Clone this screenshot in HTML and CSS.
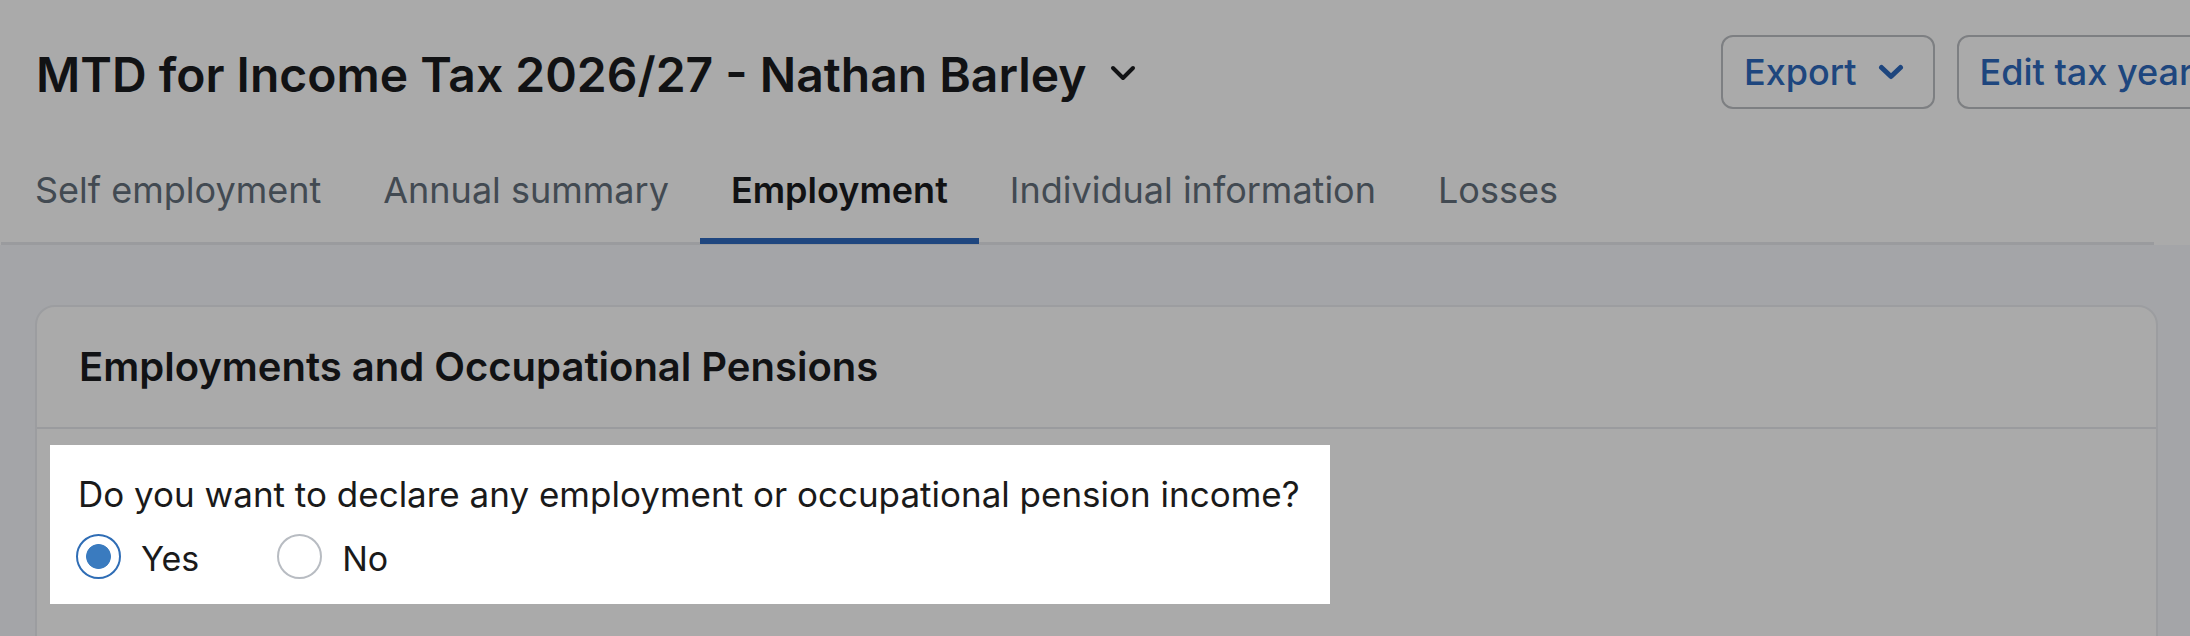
FILE: index.html
```html
<!DOCTYPE html>
<html lang="en">
  <head>
    <meta charset="UTF-8" />
    <meta name="viewport" content="width=device-width, initial-scale=1.0" />
    <title>MTD for Income Tax - Employment</title>
    <link rel="stylesheet" href="styles.css">
  </head>
  <body>
    <!-- Page header -->
    <header class="page-header">
      <div class="title-row">
        <h1 class="page-title">
          MTD for Income Tax 2026/27 - Nathan Barley
          <svg class="title-caret" width="26" height="16" viewBox="0 0 26 16">
            <path d="M3 3 L13 13 L23 3" />
          </svg>
        </h1>
        <div class="actions">
          <button class="btn">
            Export
            <svg class="btn-caret" width="26" height="16" viewBox="0 0 26 16">
              <path d="M3.5 3.5 L13 12.5 L22.5 3.5" />
            </svg>
          </button>
          <button class="btn">Edit tax year</button>
        </div>
      </div>

      <!-- Tabs -->
      <nav class="tabs">
        <a class="tab" href="#">Self employment</a>
        <a class="tab" href="#">Annual summary</a>
        <a class="tab active" href="#">Employment</a>
        <a class="tab" href="#">Individual information</a>
        <a class="tab" href="#">Losses</a>
      </nav>
    </header>

    <main class="content">
      <section class="card">
        <div class="card-header">
          <h2>Employments and Occupational Pensions</h2>
        </div>
        <div class="card-body">
          <!-- Highlighted step of the guided tour -->
          <div class="question spotlight">
            <p class="question-text">
              Do you want to declare any employment or occupational pension income?
            </p>
            <div class="radio-group">
              <label class="radio">
                <input type="radio" name="declare" value="yes" checked />
                <span>Yes</span>
              </label>
              <label class="radio">
                <input type="radio" name="declare" value="no" />
                <span>No</span>
              </label>
            </div>
          </div>
        </div>
      </section>
    </main>
  </body>
</html>
```

FILE: styles.css
```css
body {
  margin: 0;
  font-family: Inter, "Noto Sans", sans-serif;
  color: #1a1b1e;
  background: #f6f8fd;
  overflow: hidden;
}
.page-header {
  background: #ffffff;
  padding: 35px 36px 0;
}
.title-row {
  display: flex;
  align-items: center;
}
.page-title {
  flex: 1;
  display: flex;
  align-items: center;
  gap: 23px;
  margin: 6px 0 0;
  font-size: 48px;
  line-height: 58px;
  font-weight: 600;
  white-space: nowrap;
}
.title-caret {
  margin-top: -5px;
}
.title-caret path {
  fill: none;
  stroke: #1a1b1e;
  stroke-width: 4;
  stroke-linecap: round;
  stroke-linejoin: round;
}
.actions {
  flex: 0 0 433px;
  min-width: 0;
  display: flex;
  gap: 22px;
}
.btn {
  flex-shrink: 0;
  display: flex;
  align-items: center;
  gap: 21px;
  height: 74px;
  padding: 0 29px 0 21px;
  background: #ffffff;
  border: 2px solid #bcbfc3;
  border-radius: 12px;
  color: #2e69be;
  font-family: inherit;
  font-size: 36px;
  font-weight: 500;
  white-space: nowrap;
}
.btn-caret path {
  fill: none;
  stroke: #2e69be;
  stroke-width: 5;
  stroke-linecap: round;
  stroke-linejoin: round;
}
.tabs {
  display: flex;
  margin-top: 59px;
  margin-left: -35px;
  padding-left: 3px;
  border-bottom: 3px solid #e8e9ee;
}
.tab {
  padding: 0 31px 26px;
  margin-bottom: -2px;
  border-bottom: 6px solid transparent;
  font-size: 36px;
  line-height: 44px;
  color: #646f7b;
  text-decoration: none;
  white-space: nowrap;
}
.tab.active {
  color: #1a1b1e;
  font-weight: 600;
  border-bottom-color: #2f69bf;
}
.content {
  padding: 60px 32px 0 35px;
}
.card {
  background: #ffffff;
  border: 2px solid #eaecf0;
  border-radius: 20px;
}
.card-header {
  padding: 36px 42px;
  border-bottom: 2px solid #e8e9ee;
}
.card-header h2 {
  margin: 0;
  font-size: 40px;
  line-height: 48px;
  font-weight: 600;
}
.card-body {
  padding: 16px 13px;
  min-height: 300px;
}
.question {
  width: fit-content;
  padding: 29px 30px 23px 26px;
  background: #ffffff;
}
.spotlight {
  position: relative;
  z-index: 10;
  box-shadow: 0 0 0 4000px rgba(0, 0, 0, 0.333);
}
.question-text {
  margin: 0 0 19px 2px;
  font-size: 35px;
  line-height: 41px;
  color: #1a1a1a;
}
.radio-group {
  display: flex;
  gap: 78px;
}
.radio {
  display: flex;
  align-items: flex-start;
  gap: 20px;
  font-size: 34px;
  line-height: 44px;
  color: #1a1a1a;
}
.radio span {
  margin-top: 3px;
}
.radio input {
  appearance: none;
  width: 45px;
  height: 45px;
  margin: 0;
  border: 2px solid #b8bcc2;
  border-radius: 50%;
  background: #ffffff;
}
.radio input:checked {
  border-color: #2f6db5;
  background: radial-gradient(circle, #3a7bbf 12px, #ffffff 12.8px);
}
```
